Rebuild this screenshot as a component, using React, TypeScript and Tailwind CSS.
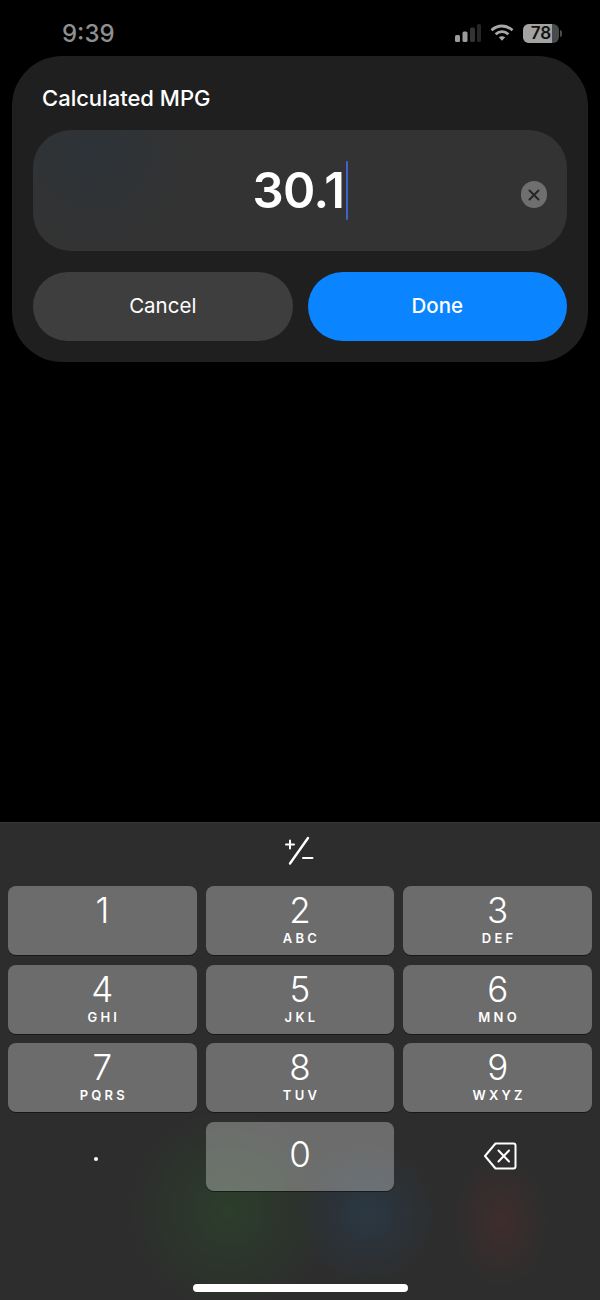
import React from 'react';

const rows: { digit: string; letters?: string }[] = [
  { digit: '1' },
  { digit: '2', letters: 'ABC' },
  { digit: '3', letters: 'DEF' },
  { digit: '4', letters: 'GHI' },
  { digit: '5', letters: 'JKL' },
  { digit: '6', letters: 'MNO' },
  { digit: '7', letters: 'PQRS' },
  { digit: '8', letters: 'TUV' },
  { digit: '9', letters: 'WXYZ' },
];

const StatusBar: React.FC = () => (
  <div className="flex h-[56px] items-start justify-between pl-[62px] pr-[38px] pt-[20px]">
    <span className="text-[24px] leading-[28px] font-medium text-[#8f8f8f]">9:39</span>
    <div className="flex items-center gap-[9px] pt-[3px]">
      <svg width="26" height="20" viewBox="0 0 26 20" className="text-[#9c9c9c]">
        <rect x="0" y="12" width="5" height="7" rx="1.5" fill="currentColor" />
        <rect x="7.5" y="8.5" width="5" height="10.5" rx="1.5" fill="currentColor" />
        <rect x="15" y="4.5" width="5" height="14.5" rx="1.5" fill="#333333" />
        <rect x="22" y="1" width="4" height="18" rx="1.5" fill="#262626" />
      </svg>
      <svg width="24" height="20" viewBox="0 0 24 20" fill="none" className="text-[#a8a8a8]">
        <path d="M1.5 7.2C7.5 1.6 16.5 1.6 22.5 7.2" stroke="currentColor" strokeWidth="2.8" />
        <path d="M5.6 11.2C9.4 7.9 14.6 7.9 18.4 11.2" stroke="currentColor" strokeWidth="2.8" />
        <path d="M8.8 14.3L12 17.8L15.2 14.3C13.2 12.8 10.8 12.8 8.8 14.3Z" fill="currentColor" />
      </svg>
      <div className="flex items-center gap-[1px]">
        <div className="relative flex h-[19px] w-[36px] overflow-hidden rounded-[6px] bg-[#4a4a4a]">
          <div className="h-full w-[29px] bg-[#a3a3a3]" />
          <span className="absolute inset-0 flex items-center justify-center text-[17px] leading-none font-semibold text-[#111111]">78</span>
        </div>
        <div className="h-[7px] w-[2px] rounded-r-full bg-[#4a4a4a]" />
      </div>
    </div>
  </div>
);

const PromptCard: React.FC = () => (
  <div className="mx-3 flex h-[306px] flex-col rounded-[50px] bg-[#1f1f20] px-[21px] pt-[29px]">
    <div className="pl-[9px] text-[22px] leading-[26px] font-medium text-white">Calculated MPG</div>
    <div className="relative mt-[19px] flex h-[121px] items-center justify-center rounded-[38px] bg-[#333333] bg-[radial-gradient(circle_at_60px_20px,#2d3338_0%,#333333_100px)]">
      <span className="text-[49px] leading-none font-semibold tracking-[-0.5px] text-white">30.1</span>
      <span className="ml-[1px] h-[59px] w-[2px] rounded-full bg-[#3f63c9]" />
      <div className="absolute right-[20px] top-[51px] flex h-[27px] w-[26px] items-center justify-center rounded-full bg-[#6f6f6f]">
        <svg width="14" height="14" viewBox="0 0 14 14" fill="none" stroke="#262626" strokeWidth="2" strokeLinecap="round">
          <path d="M2.5 2.5L11.5 11.5M11.5 2.5L2.5 11.5" />
        </svg>
      </div>
    </div>
    <div className="mt-[21px] grid grid-cols-2 gap-[15px]">
      <button className="h-[69px] rounded-full bg-[#3e3e3e] text-[20.5px] font-normal text-white">Cancel</button>
      <button className="h-[69px] rounded-full bg-[#0a84ff] text-[20.5px] font-medium text-white">Done</button>
    </div>
  </div>
);

const Key: React.FC<{ digit: string; letters?: string; center?: boolean }> = ({ digit, letters, center }) => (
  <div className={`flex h-[69px] flex-col items-center rounded-[8px] bg-white/30 shadow-[0_1px_0_rgba(0,0,0,0.45)] ${center ? 'pt-[14px]' : 'pt-[6px]'}`}>
    <span className="text-[35px] leading-[36px] font-light text-white">{digit}</span>
    {letters && (
      <span className="mt-[3px] pl-[3px] text-[13px] leading-[14px] font-semibold tracking-[0.25em] text-white">{letters}</span>
    )}
  </div>
);

const Keyboard: React.FC = () => (
  <div className="relative mt-auto h-[478px] overflow-hidden border-t border-[#383838] bg-[#2d2d2d]">
    {/* colored glow from the screen behind the keyboard */}
    <div className="absolute left-[120px] top-[278px] h-[220px] w-[220px] bg-[radial-gradient(circle,rgba(40,105,40,0.28)_0%,rgba(40,105,40,0)_65%)]" />
    <div className="absolute left-[297px] top-[321px] h-[140px] w-[140px] bg-[radial-gradient(circle,rgba(35,85,125,0.28)_0%,rgba(35,85,125,0)_70%)]" />
    <div className="absolute left-[451px] top-[328px] h-[140px] w-[100px] bg-[radial-gradient(ellipse,rgba(115,45,45,0.25)_0%,rgba(115,45,45,0)_70%)]" />

    <div className="relative flex h-[63px] items-center justify-center pb-[8px]">
      <svg width="30" height="32" viewBox="0 0 30 32" fill="none" stroke="white" strokeWidth="2" strokeLinecap="round">
        <path d="M1 9.5H9M5 5.5V13.5" />
        <path d="M5 28.5L23 3" strokeWidth="2.4" />
        <path d="M18 23H27.5" />
      </svg>
    </div>

    <div className="relative grid grid-cols-3 gap-x-[9px] gap-y-[9.67px] px-2">
      {rows.map(k => (
        <Key key={k.digit} digit={k.digit} letters={k.letters} />
      ))}
      <div className="flex h-[69px] items-center justify-center pr-[12px] pt-[6px]">
        <span className="block h-[4px] w-[4px] rounded-full bg-white" />
      </div>
      <Key digit="0" center />
      <div className="flex h-[69px] items-center justify-center pl-[6px]">
        <svg width="36" height="28" viewBox="0 0 36 28" fill="none" stroke="white" strokeWidth="2" strokeLinejoin="round" strokeLinecap="round">
          <path d="M12.5 1.5H30.5C31.6 1.5 32.5 2.4 32.5 3.5V24.5C32.5 25.6 31.6 26.5 30.5 26.5H12.5L2 14L12.5 1.5Z" />
          <path d="M15.5 8.5L26 19.5M26 8.5L15.5 19.5" />
        </svg>
      </div>
    </div>

    <div className="absolute bottom-[8px] left-[193px] h-[8px] w-[215px] rounded-full bg-white" />
  </div>
);

const App: React.FC = () => {
  return (
    <div className="flex h-[1300px] w-[600px] flex-col overflow-hidden bg-black font-['Inter',sans-serif]">
      <StatusBar />
      <PromptCard />
      <Keyboard />
    </div>
  );
};

export default App;
